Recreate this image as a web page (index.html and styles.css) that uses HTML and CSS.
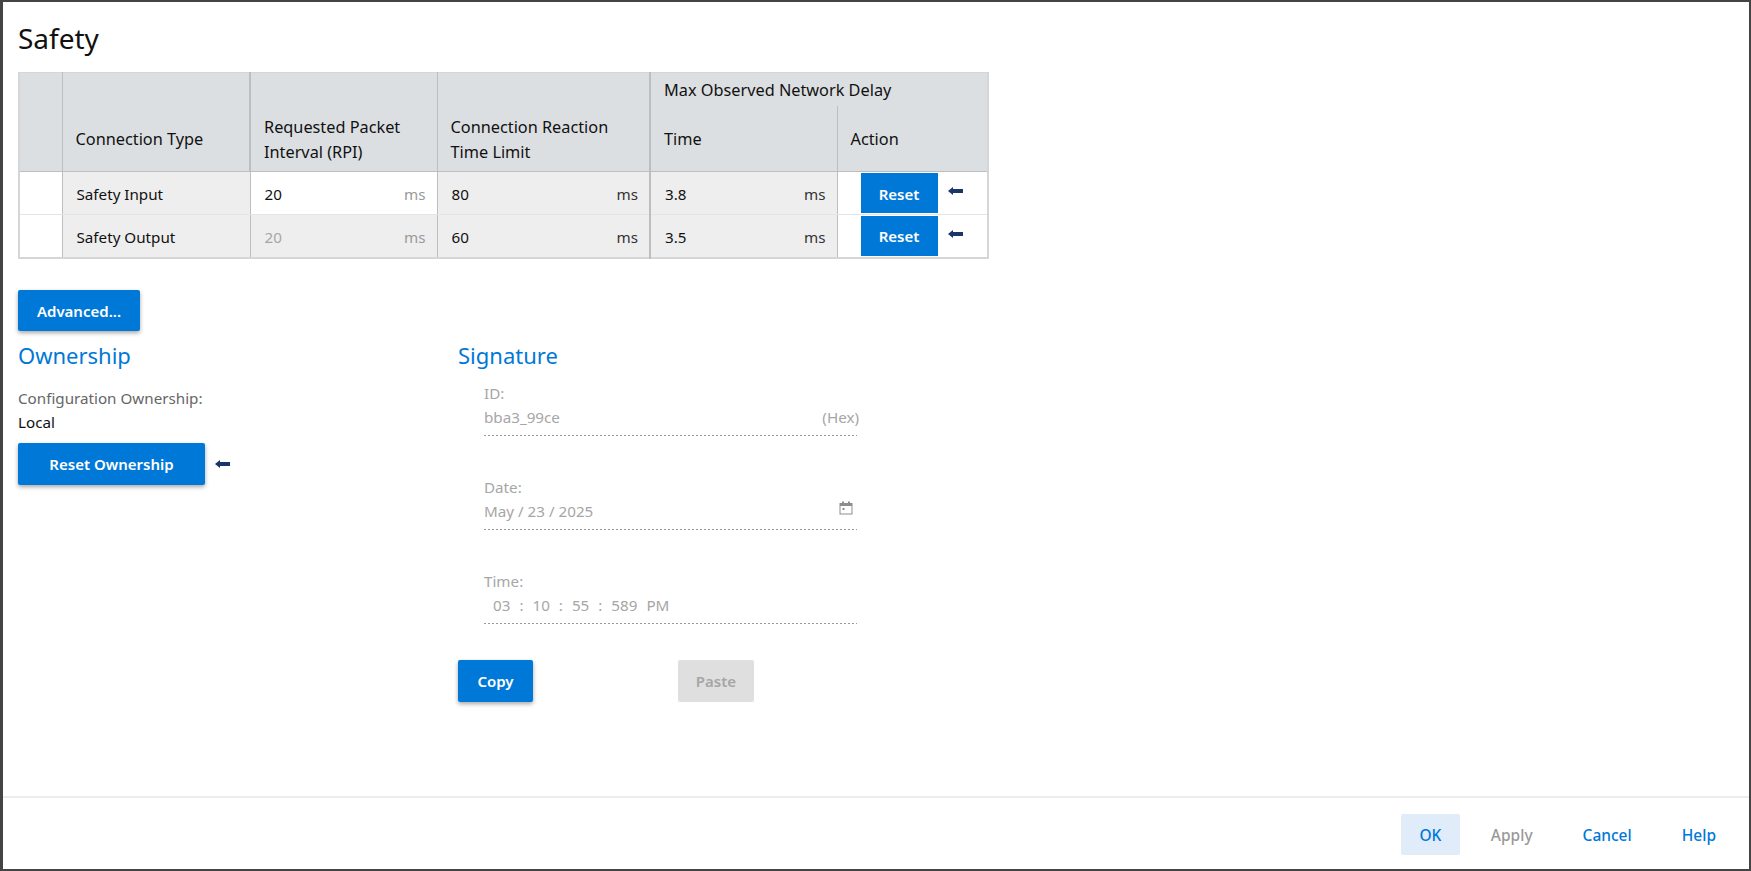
FILE: index.html
```html
<!DOCTYPE html>
<html lang="en">
<head>
    <meta charset="UTF-8">
    <meta name="viewport" content="width=device-width, initial-scale=1.0">
    <title>Safety</title>
    <link rel="stylesheet" href="styles.css">
</head>
<body>
    <div class="window">
        <div class="content">
            <h1>Safety</h1>
            <table class="safety-table">
                <colgroup>
                    <col class="col-select">
                    <col class="col-type">
                    <col class="col-rpi">
                    <col class="col-limit">
                    <col class="col-time">
                    <col class="col-action">
                </colgroup>
                <thead>
                    <tr class="head-top">
                        <th rowspan="2"></th>
                        <th rowspan="2">Connection Type</th>
                        <th rowspan="2" class="heavy">Requested Packet Interval (RPI)</th>
                        <th rowspan="2">Connection Reaction Time Limit</th>
                        <th colspan="2" class="heavy group">Max Observed Network Delay</th>
                    </tr>
                    <tr class="head-bottom">
                        <th class="heavy">Time</th>
                        <th>Action</th>
                    </tr>
                </thead>
                <tbody>
                    <tr>
                        <td class="blank"></td>
                        <td class="grey">Safety Input</td>
                        <td class="blank"><div class="cell-value">20<span class="unit muted">ms</span></div></td>
                        <td class="grey"><div class="cell-value">80<span class="unit">ms</span></div></td>
                        <td class="grey heavy"><div class="cell-value">3.8<span class="unit">ms</span></div></td>
                        <td class="blank">
                            <div class="action-cell">
                                <button class="btn btn-reset">Reset</button>
                                <svg class="arrow" viewBox="0 0 15 8"><path d="M0 4 L5 0 V2 H15 V6 H5 V8 Z"/></svg>
                            </div>
                        </td>
                    </tr>
                    <tr>
                        <td class="blank"></td>
                        <td class="grey">Safety Output</td>
                        <td class="grey"><div class="cell-value disabled">20<span class="unit muted">ms</span></div></td>
                        <td class="grey"><div class="cell-value">60<span class="unit">ms</span></div></td>
                        <td class="grey heavy"><div class="cell-value">3.5<span class="unit">ms</span></div></td>
                        <td class="blank">
                            <div class="action-cell">
                                <button class="btn btn-reset">Reset</button>
                                <svg class="arrow" viewBox="0 0 15 8"><path d="M0 4 L5 0 V2 H15 V6 H5 V8 Z"/></svg>
                            </div>
                        </td>
                    </tr>
                </tbody>
            </table>

            <button class="btn btn-raised btn-advanced">Advanced...</button>

            <div class="sections">
                <div class="ownership">
                    <h2>Ownership</h2>
                    <div class="owner-label">Configuration Ownership:</div>
                    <div class="owner-value">Local</div>
                    <div class="owner-action">
                        <button class="btn btn-raised btn-owner">Reset Ownership</button>
                        <svg class="arrow arrow-owner" viewBox="0 0 15 8"><path d="M0 4 L5 0 V2 H15 V6 H5 V8 Z"/></svg>
                    </div>
                </div>
                <div class="signature">
                    <h2>Signature</h2>
                    <div class="fields">
                        <div class="field">
                            <label>ID:</label>
                            <div class="field-line"><span>bba3_99ce</span><span class="hex">(Hex)</span></div>
                        </div>
                        <div class="field">
                            <label>Date:</label>
                            <div class="field-line">
                                <span>May / 23 / 2025</span>
                                <svg class="calendar" viewBox="0 0 14 14">
                                    <path d="M0.5 2 H13.5 V13.5 H0.5 Z M1.5 5 V12.5 H12.5 V5 Z M3 0.5 H5 V2 H3 Z M9 0.5 H11 V2 H9 Z M3.5 7 H5.5 V9 H3.5 Z" fill-rule="evenodd"/>
                                </svg>
                            </div>
                        </div>
                        <div class="field">
                            <label>Time:</label>
                            <div class="field-line time-line">
                                <span>03</span><span>:</span><span>10</span><span>:</span><span>55</span><span>:</span><span>589</span><span>PM</span>
                            </div>
                        </div>
                    </div>
                    <div class="sig-buttons">
                        <button class="btn btn-raised btn-copy">Copy</button>
                        <button class="btn btn-paste" disabled>Paste</button>
                    </div>
                </div>
            </div>
        </div>
        <div class="footer">
            <button class="link-btn primary">OK</button>
            <button class="link-btn off" disabled>Apply</button>
            <button class="link-btn">Cancel</button>
            <button class="link-btn">Help</button>
        </div>
    </div>
</body>
</html>
```

FILE: styles.css
```css
* {
    box-sizing: border-box;
}
html, body {
    margin: 0;
    height: 100%;
}
body {
    font-family: "Noto Sans", "Open Sans", sans-serif;
    font-size: 15.2px;
    color: #111;
    background: #fff;
}
.window {
    height: 871px;
    display: flex;
    flex-direction: column;
    border: 2px solid #444;
    border-left-width: 3px;
}
.content {
    flex: 1;
    padding: 0 15px;
}
h1 {
    font-size: 28px;
    font-weight: 400;
    line-height: 38px;
    margin: 17px 0 15px;
    color: #111;
}
h2 {
    font-size: 22px;
    font-weight: 400;
    line-height: 30px;
    margin: 0;
    color: #0078d7;
}

/* table */
.safety-table {
    border-collapse: collapse;
    table-layout: fixed;
    width: 969px;
    border: 2px solid #d4d6d8;
    border-top-width: 1px;
}
.col-select { width: 43px; }
.col-type { width: 188px; }
.col-rpi { width: 187px; }
.col-limit { width: 213px; }
.col-time { width: 187px; }
.col-action { width: 151px; }
.safety-table th {
    background: #dcdfe2;
    font-weight: 400;
    font-size: 16.3px;
    line-height: 25px;
    text-align: left;
    vertical-align: middle;
    padding: 35px 12px 0 13px;
    border-left: 1px solid #bcbfc1;
    border-bottom: 1px solid #bcbfc1;
}
.safety-table th.heavy,
.safety-table td.heavy {
    border-left: 2px solid #bcbfc1;
}
.safety-table th.group {
    border-bottom: none;
    padding-top: 2px;
}
.head-top {
    height: 33px;
}
.head-bottom {
    height: 66px;
}
.safety-table .head-bottom th {
    padding-top: 3px;
}
.safety-table td {
    height: 43px;
    padding: 2px 11px 0 14px;
    border-left: 1px solid #bcbfc1;
    border-bottom: 1px solid #e4e5e6;
}
.safety-table td.grey {
    background: #eee;
}
.safety-table td.blank {
    background: #fff;
}
.cell-value {
    display: flex;
    justify-content: space-between;
    align-items: center;
}
.unit {
    color: #333;
}
.muted {
    color: #999;
}
.disabled {
    color: #a6a6a6;
}
.action-cell {
    display: flex;
    align-items: center;
    padding-left: 9px;
    margin-top: -2px;
}

/* buttons */
.btn {
    font-family: inherit;
    font-size: 15px;
    font-weight: 600;
    color: #fff;
    background: #0078d7;
    border: none;
    border-radius: 2px;
    padding: 1px 0 0;
}
.btn-raised {
    box-shadow: 0 2px 4px rgba(0,0,0,0.35);
}
.btn-reset {
    width: 77px;
    height: 40px;
    border-radius: 0;
}
.arrow {
    width: 15px;
    height: 8px;
    fill: #1a3568;
    margin-left: 10px;
    margin-top: -4px;
}
.arrow-owner {
    margin-top: 0;
}
.btn-advanced {
    display: block;
    width: 122px;
    height: 41px;
    margin-top: 31px;
}

/* lower sections */
.sections {
    display: flex;
    margin-top: 9px;
}
.ownership {
    width: 440px;
}
.owner-label {
    color: #666;
    margin-top: 18px;
    line-height: 20px;
}
.owner-value {
    color: #111;
    line-height: 20px;
    margin-top: 4px;
}
.owner-action {
    display: flex;
    align-items: center;
    margin-top: 11px;
}
.btn-owner {
    width: 187px;
    height: 42px;
}
.signature {
    width: 500px;
}
.fields {
    margin-left: 26px;
    width: 373px;
    margin-top: 13px;
}
.field {
    height: 94px;
    color: #a6a6a6;
}
.field label {
    display: block;
    line-height: 21px;
}
.field-line {
    display: flex;
    justify-content: space-between;
    align-items: center;
    height: 32px;
    padding-bottom: 6px;
    background: linear-gradient(to right, #999 50%, transparent 50%) left bottom / 4px 1px repeat-x;
}
.hex {
    margin-right: -2px;
}
.calendar {
    width: 14px;
    height: 14px;
    fill: #8d8d8d;
    margin-right: 4px;
    margin-top: -6px;
}
.time-line {
    justify-content: flex-start;
    gap: 9px;
    padding-left: 9px;
}
.sig-buttons {
    display: flex;
    gap: 145px;
    margin-top: -5px;
}
.btn-copy {
    width: 75px;
    height: 42px;
}
.btn-paste {
    width: 76px;
    height: 42px;
    background: #dfdfdf;
    color: #a6a6a6;
}

/* footer */
.footer {
    height: 73px;
    border-top: 2px solid #ebebf0;
    display: flex;
    justify-content: flex-end;
    align-items: center;
    padding: 2px 15px 0 0;
}
.link-btn {
    font-family: inherit;
    font-size: 15.5px;
    font-weight: 500;
    height: 41px;
    padding: 0 18px;
    background: none;
    border: none;
    border-radius: 2px;
    color: #0078d7;
    margin-left: 14px;
}
.link-btn.primary {
    background: #e0ecf9;
    padding: 0 18.5px;
}
.link-btn.off {
    color: #999;
    margin-left: 13px;
}
```
